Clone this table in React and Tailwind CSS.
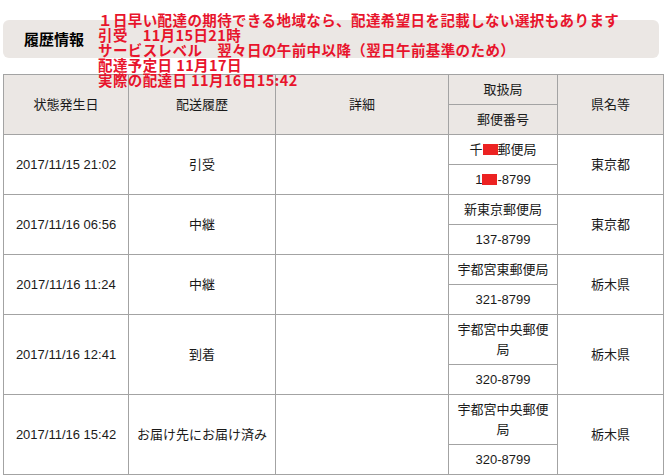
import React from "react";

const rows = [
  { date: "2017/11/15 21:02", status: "引受", office: "千■郵便局", zip: "1■-8799", pref: "東京都", redact: true },
  { date: "2017/11/16 06:56", status: "中継", office: "新東京郵便局", zip: "137-8799", pref: "東京都" },
  { date: "2017/11/16 11:24", status: "中継", office: "宇都宮東郵便局", zip: "321-8799", pref: "栃木県" },
  { date: "2017/11/16 12:41", status: "到着", office: "宇都宮中央郵便局", zip: "320-8799", pref: "栃木県" },
  { date: "2017/11/16 15:42", status: "お届け先にお届け済み", office: "宇都宮中央郵便局", zip: "320-8799", pref: "栃木県" },
];

const Redact = () => <span className="inline-block w-[15px] h-[11px] bg-[#ec2222] align-[-1px]" />;

const td = "border border-[#a3a3a3] text-center align-middle px-[6px] pt-[5px] pb-[4px] leading-[20px]";
const th = "border border-[#a3a3a3] text-center align-middle px-[6px] pt-[5px] pb-[4px] leading-[20px] font-normal bg-[#ebe7e4]";

export default function App() {
  return (
    <div className="relative w-[667px] h-[476px] bg-white text-[#1a1a1a] font-['Liberation_Sans','Noto_Sans_CJK_JP',sans-serif] text-[13px] overflow-hidden">
      {/* panel */}
      <div className="ml-[3px] mt-[20px] w-[656px] h-[38px] rounded-[6px] bg-[#ebe7e4] flex items-center pl-[21px]">
        <span className="font-bold text-[15px] text-black font-['Noto_Sans_CJK_JP',sans-serif]">履歴情報</span>
      </div>

      {/* table */}
      <table className="ml-[3px] mt-[16px] w-[660px] border-collapse table-fixed">
        <colgroup>
          <col className="w-[125px]" />
          <col className="w-[147px]" />
          <col className="w-[173px]" />
          <col className="w-[109px]" />
          <col className="w-[106px]" />
        </colgroup>
        <thead>
          <tr>
            <th rowSpan={2} className={th}>状態発生日</th>
            <th rowSpan={2} className={th}>配送履歴</th>
            <th rowSpan={2} className={th}>詳細</th>
            <th className={th}>取扱局</th>
            <th rowSpan={2} className={th}>県名等</th>
          </tr>
          <tr>
            <th className={th}>郵便番号</th>
          </tr>
        </thead>
        <tbody>
          {rows.map((r, i) => (
            <React.Fragment key={i}>
              <tr>
                <td rowSpan={2} className={td}>{r.date}</td>
                <td rowSpan={2} className={td}>{r.status}</td>
                <td rowSpan={2} className={td}></td>
                <td className={td}>
                  {r.redact ? (
                    <>千<Redact />郵便局</>
                  ) : (
                    r.office
                  )}
                </td>
                <td rowSpan={2} className={td}>{r.pref}</td>
              </tr>
              <tr>
                <td className={td}>
                  {r.redact ? (
                    <>1<Redact />-8799</>
                  ) : (
                    r.zip
                  )}
                </td>
              </tr>
            </React.Fragment>
          ))}
        </tbody>
      </table>

      {/* red note overlay */}
      <div className="absolute left-[98px] top-[12px] text-[#e8142c] font-bold text-[14.5px] tracking-[0.4px] leading-[15px] font-['Noto_Sans_CJK_JP',sans-serif] whitespace-nowrap">
        <div>１日早い配達の期待できる地域なら、配達希望日を記載しない選択もあります</div>
        <div>引受　11月15日21時</div>
        <div>サービスレベル　翌々日の午前中以降（翌日午前基準のため）</div>
        <div>配達予定日 11月17日</div>
        <div>実際の配達日 11月16日15:42</div>
      </div>
    </div>
  );
}
